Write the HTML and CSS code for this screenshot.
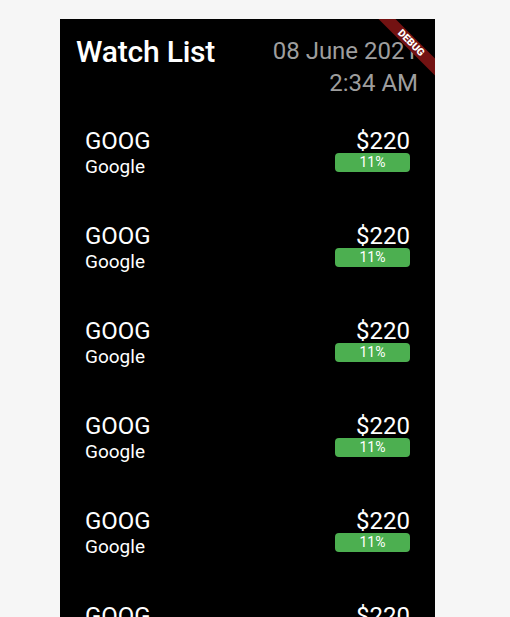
FILE: index.html
```html
<!DOCTYPE html>
<html>
<head>
<meta charset="utf-8">
<link rel="stylesheet" href="styles.css">
</head>
<body>
<div class="page">
  <div class="phone">
    <div class="header">
      <div class="title">Watch List</div>
      <div class="date">
        <div>08 June 2021</div>
        <div>2:34 AM</div>
      </div>
    </div>
    <div class="list">
      <div class="row">
        <div class="left"><div class="symbol">GOOG</div><div class="name">Google</div></div>
        <div class="right"><div class="price">$220</div><div class="badge">11%</div></div>
      </div>
      <div class="row">
        <div class="left"><div class="symbol">GOOG</div><div class="name">Google</div></div>
        <div class="right"><div class="price">$220</div><div class="badge">11%</div></div>
      </div>
      <div class="row">
        <div class="left"><div class="symbol">GOOG</div><div class="name">Google</div></div>
        <div class="right"><div class="price">$220</div><div class="badge">11%</div></div>
      </div>
      <div class="row">
        <div class="left"><div class="symbol">GOOG</div><div class="name">Google</div></div>
        <div class="right"><div class="price">$220</div><div class="badge">11%</div></div>
      </div>
      <div class="row">
        <div class="left"><div class="symbol">GOOG</div><div class="name">Google</div></div>
        <div class="right"><div class="price">$220</div><div class="badge">11%</div></div>
      </div>
      <div class="row">
        <div class="left"><div class="symbol">GOOG</div><div class="name">Google</div></div>
        <div class="right"><div class="price">$220</div><div class="badge">11%</div></div>
      </div>
    </div>
    <div class="banner">DEBUG</div>
  </div>
</div>
</body>
</html>
```
FILE: styles.css
```css
html, body {
  margin: 0;
  padding: 0;
  background: #f6f6f6;
  overflow: hidden;
}
.page {
  padding: 19px 0 0 60px;
  height: 598px;
}
.phone {
  position: relative;
  width: 375px;
  height: 598px;
  background: #000;
  overflow: hidden;
  font-family: Roboto, "Noto Sans", sans-serif;
  color: #fff;
}
.header {
  display: flex;
  justify-content: space-between;
  align-items: flex-start;
  padding: 15px 17px 0 16px;
}
.title {
  font-size: 30px;
  font-weight: 500;
  line-height: 35px;
  letter-spacing: -0.2px;
}
.date {
  margin-top: 1px;
  font-size: 24px;
  line-height: 32px;
  color: #9e9e9e;
  text-align: right;
}
.list {
  display: flex;
  flex-direction: column;
  margin-top: -1px;
}
.row {
  box-sizing: border-box;
  height: 95px;
  flex-shrink: 0;
  padding: 29px 25px 0 25px;
  display: flex;
  justify-content: space-between;
  align-items: flex-start;
}
.symbol {
  font-size: 24px;
  line-height: 28px;
}
.name {
  margin-top: 1px;
  font-size: 19px;
  line-height: 22px;
}
.right {
  display: flex;
  flex-direction: column;
  align-items: flex-end;
}
.price {
  font-size: 24px;
  line-height: 28px;
}
.badge {
  margin-top: -2px;
  width: 75px;
  height: 19px;
  border-radius: 4px;
  background: #4caf50;
  font-size: 14px;
  line-height: 19px;
  text-align: center;
}
.banner {
  position: absolute;
  left: 311px;
  top: 18px;
  width: 80px;
  height: 12px;
  background: #731212;
  transform: rotate(45deg);
  font-size: 10.2px;
  font-weight: 900;
  line-height: 12px;
  text-align: center;
  color: #fff;
}
```
